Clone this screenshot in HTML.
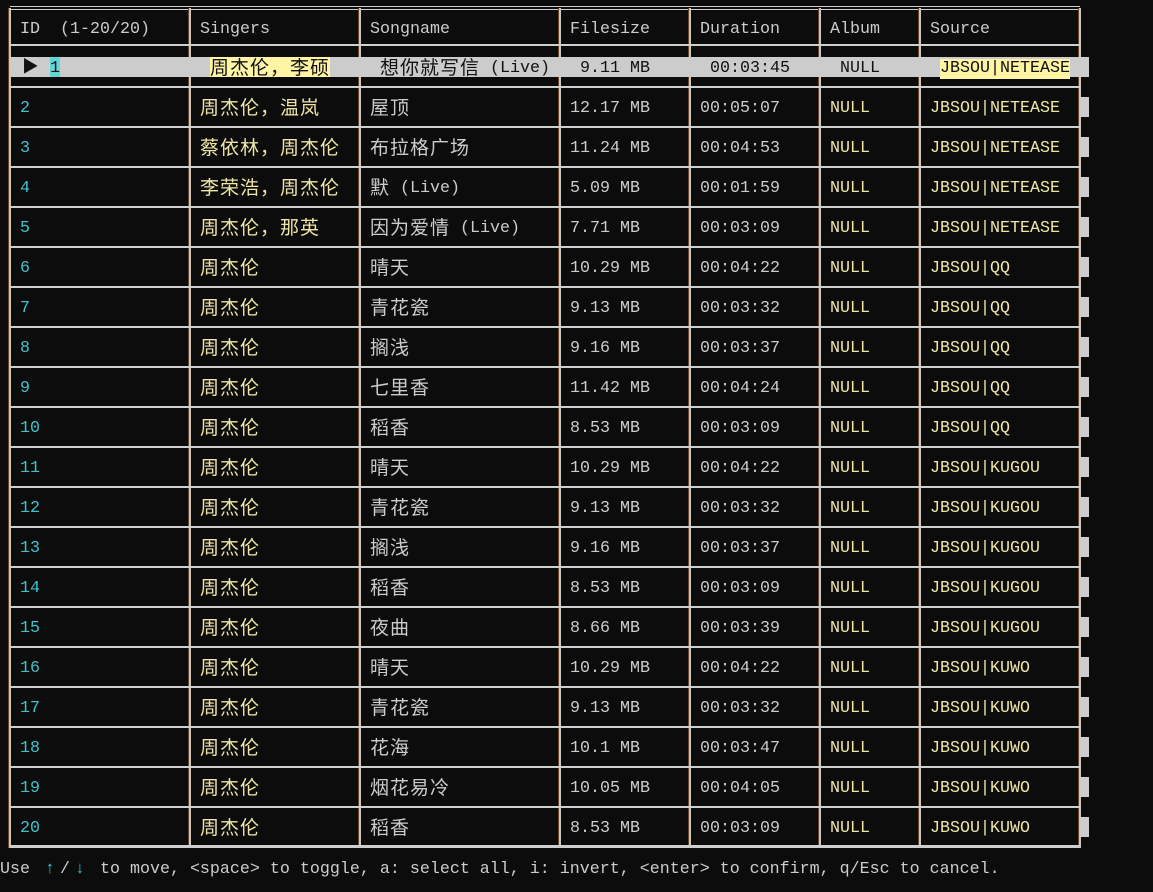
<!DOCTYPE html>
<html><head><meta charset="utf-8"><style>
body{margin:0;background:#0c0c0c;width:1153px;height:892px;overflow:hidden;position:relative;font-family:"Liberation Mono","Noto Sans CJK SC",monospace;font-size:16.67px;color:#cccccc}
.v{position:absolute;top:8px;height:840px;width:2px;background:#c8c8c8;border-left:1px solid #6a4420}
.h{position:absolute;left:10px;width:1070px;height:2px;background:#cfcfcf}
.r{position:absolute;left:0;height:20px;line-height:20px;white-space:pre}
.r span{position:absolute;top:0}
b{font-weight:normal;font-family:"Noto Sans CJK SC",sans-serif;font-size:19px;letter-spacing:1px;line-height:20px;display:inline-block;vertical-align:top;height:20px;position:relative;top:-2px}
.c0{left:20px;color:#3ec3cc}.c1{left:200px;color:#efe6a6}.c2{left:370px}.c3{left:570px}.c4{left:700px}.c5{left:830px;color:#efe6a6}.c6{left:930px;color:#efe6a6}
.sb{position:absolute;left:1080px;width:9px;height:20px;background:#cccccc;top:-2px}
.ar{display:inline-block;width:20px;text-align:center;color:#3ec3cc}
</style></head><body>
<div class="h" style="top:6px;height:1px"></div><div class="h" style="top:9px;height:1px"></div>
<div class="v" style="left:8px"></div><div class="v" style="left:188px"></div><div class="v" style="left:358px"></div><div class="v" style="left:558px"></div><div class="v" style="left:688px"></div><div class="v" style="left:818px"></div><div class="v" style="left:918px"></div><div class="v" style="left:1078px"></div>
<div class="r" style="top:20px"><span class="c0" style="color:#ccc">ID  (1-20/20)</span><span class="c1" style="color:#ccc">Singers</span><span class="c2">Songname</span><span class="c3">Filesize</span><span class="c4">Duration</span><span class="c5" style="color:#ccc">Album</span><span class="c6" style="color:#ccc">Source</span></div>
<div class="h" style="top:44px;height:2px"></div>
<div style="position:absolute;left:10px;top:57px;width:1079px;height:20px;background:#cccccc"></div>
<div class="r" style="top:59px;color:#111"><span style="left:22px">▶</span><span style="left:50px;background:#5fd7d7;width:10px;top:-2px;height:20px;line-height:24px">1</span><span style="left:210px;background:#fff5a5;top:-2px;height:20px"><b style="top:0">周杰伦，李硕</b></span><span style="left:380px"><b>想你就写信</b> (Live)</span><span style="left:580px">9.11 MB</span><span style="left:710px">00:03:45</span><span style="left:840px">NULL</span><span style="left:940px;background:#fff5a5">JBSOU|NETEASE</span></div>
<div class="h" style="top:86px"></div>
<div class="r" style="top:99px"><span class="c0">2</span><span class="c1"><b>周杰伦，温岚</b></span><span class="c2"><b>屋顶</b></span><span class="c3">12.17 MB</span><span class="c4">00:05:07</span><span class="c5">NULL</span><span class="c6">JBSOU|NETEASE</span><i class="sb"></i></div>
<div class="h" style="top:126px"></div>
<div class="r" style="top:139px"><span class="c0">3</span><span class="c1"><b>蔡依林，周杰伦</b></span><span class="c2"><b>布拉格广场</b></span><span class="c3">11.24 MB</span><span class="c4">00:04:53</span><span class="c5">NULL</span><span class="c6">JBSOU|NETEASE</span><i class="sb"></i></div>
<div class="h" style="top:166px"></div>
<div class="r" style="top:179px"><span class="c0">4</span><span class="c1"><b>李荣浩，周杰伦</b></span><span class="c2"><b>默</b> (Live)</span><span class="c3">5.09 MB</span><span class="c4">00:01:59</span><span class="c5">NULL</span><span class="c6">JBSOU|NETEASE</span><i class="sb"></i></div>
<div class="h" style="top:206px"></div>
<div class="r" style="top:219px"><span class="c0">5</span><span class="c1"><b>周杰伦，那英</b></span><span class="c2"><b>因为爱情</b> (Live)</span><span class="c3">7.71 MB</span><span class="c4">00:03:09</span><span class="c5">NULL</span><span class="c6">JBSOU|NETEASE</span><i class="sb"></i></div>
<div class="h" style="top:246px"></div>
<div class="r" style="top:259px"><span class="c0">6</span><span class="c1"><b>周杰伦</b></span><span class="c2"><b>晴天</b></span><span class="c3">10.29 MB</span><span class="c4">00:04:22</span><span class="c5">NULL</span><span class="c6">JBSOU|QQ</span><i class="sb"></i></div>
<div class="h" style="top:286px"></div>
<div class="r" style="top:299px"><span class="c0">7</span><span class="c1"><b>周杰伦</b></span><span class="c2"><b>青花瓷</b></span><span class="c3">9.13 MB</span><span class="c4">00:03:32</span><span class="c5">NULL</span><span class="c6">JBSOU|QQ</span><i class="sb"></i></div>
<div class="h" style="top:326px"></div>
<div class="r" style="top:339px"><span class="c0">8</span><span class="c1"><b>周杰伦</b></span><span class="c2"><b>搁浅</b></span><span class="c3">9.16 MB</span><span class="c4">00:03:37</span><span class="c5">NULL</span><span class="c6">JBSOU|QQ</span><i class="sb"></i></div>
<div class="h" style="top:366px"></div>
<div class="r" style="top:379px"><span class="c0">9</span><span class="c1"><b>周杰伦</b></span><span class="c2"><b>七里香</b></span><span class="c3">11.42 MB</span><span class="c4">00:04:24</span><span class="c5">NULL</span><span class="c6">JBSOU|QQ</span><i class="sb"></i></div>
<div class="h" style="top:406px"></div>
<div class="r" style="top:419px"><span class="c0">10</span><span class="c1"><b>周杰伦</b></span><span class="c2"><b>稻香</b></span><span class="c3">8.53 MB</span><span class="c4">00:03:09</span><span class="c5">NULL</span><span class="c6">JBSOU|QQ</span><i class="sb"></i></div>
<div class="h" style="top:446px"></div>
<div class="r" style="top:459px"><span class="c0">11</span><span class="c1"><b>周杰伦</b></span><span class="c2"><b>晴天</b></span><span class="c3">10.29 MB</span><span class="c4">00:04:22</span><span class="c5">NULL</span><span class="c6">JBSOU|KUGOU</span><i class="sb"></i></div>
<div class="h" style="top:486px"></div>
<div class="r" style="top:499px"><span class="c0">12</span><span class="c1"><b>周杰伦</b></span><span class="c2"><b>青花瓷</b></span><span class="c3">9.13 MB</span><span class="c4">00:03:32</span><span class="c5">NULL</span><span class="c6">JBSOU|KUGOU</span><i class="sb"></i></div>
<div class="h" style="top:526px"></div>
<div class="r" style="top:539px"><span class="c0">13</span><span class="c1"><b>周杰伦</b></span><span class="c2"><b>搁浅</b></span><span class="c3">9.16 MB</span><span class="c4">00:03:37</span><span class="c5">NULL</span><span class="c6">JBSOU|KUGOU</span><i class="sb"></i></div>
<div class="h" style="top:566px"></div>
<div class="r" style="top:579px"><span class="c0">14</span><span class="c1"><b>周杰伦</b></span><span class="c2"><b>稻香</b></span><span class="c3">8.53 MB</span><span class="c4">00:03:09</span><span class="c5">NULL</span><span class="c6">JBSOU|KUGOU</span><i class="sb"></i></div>
<div class="h" style="top:606px"></div>
<div class="r" style="top:619px"><span class="c0">15</span><span class="c1"><b>周杰伦</b></span><span class="c2"><b>夜曲</b></span><span class="c3">8.66 MB</span><span class="c4">00:03:39</span><span class="c5">NULL</span><span class="c6">JBSOU|KUGOU</span><i class="sb"></i></div>
<div class="h" style="top:646px"></div>
<div class="r" style="top:659px"><span class="c0">16</span><span class="c1"><b>周杰伦</b></span><span class="c2"><b>晴天</b></span><span class="c3">10.29 MB</span><span class="c4">00:04:22</span><span class="c5">NULL</span><span class="c6">JBSOU|KUWO</span><i class="sb"></i></div>
<div class="h" style="top:686px"></div>
<div class="r" style="top:699px"><span class="c0">17</span><span class="c1"><b>周杰伦</b></span><span class="c2"><b>青花瓷</b></span><span class="c3">9.13 MB</span><span class="c4">00:03:32</span><span class="c5">NULL</span><span class="c6">JBSOU|KUWO</span><i class="sb"></i></div>
<div class="h" style="top:726px"></div>
<div class="r" style="top:739px"><span class="c0">18</span><span class="c1"><b>周杰伦</b></span><span class="c2"><b>花海</b></span><span class="c3">10.1 MB</span><span class="c4">00:03:47</span><span class="c5">NULL</span><span class="c6">JBSOU|KUWO</span><i class="sb"></i></div>
<div class="h" style="top:766px"></div>
<div class="r" style="top:779px"><span class="c0">19</span><span class="c1"><b>周杰伦</b></span><span class="c2"><b>烟花易冷</b></span><span class="c3">10.05 MB</span><span class="c4">00:04:05</span><span class="c5">NULL</span><span class="c6">JBSOU|KUWO</span><i class="sb"></i></div>
<div class="h" style="top:806px"></div>
<div class="r" style="top:819px"><span class="c0">20</span><span class="c1"><b>周杰伦</b></span><span class="c2"><b>稻香</b></span><span class="c3">8.53 MB</span><span class="c4">00:03:09</span><span class="c5">NULL</span><span class="c6">JBSOU|KUWO</span><i class="sb"></i></div>
<div class="h" style="top:845px;height:3px"></div>
<div class="r" style="top:860px"><span style="left:0">Use <span class="ar" style="position:static">↑</span>/<span class="ar" style="position:static">↓</span> to move, &lt;space&gt; to toggle, a: select all, i: invert, &lt;enter&gt; to confirm, q/Esc to cancel.</span></div>
</body></html>
